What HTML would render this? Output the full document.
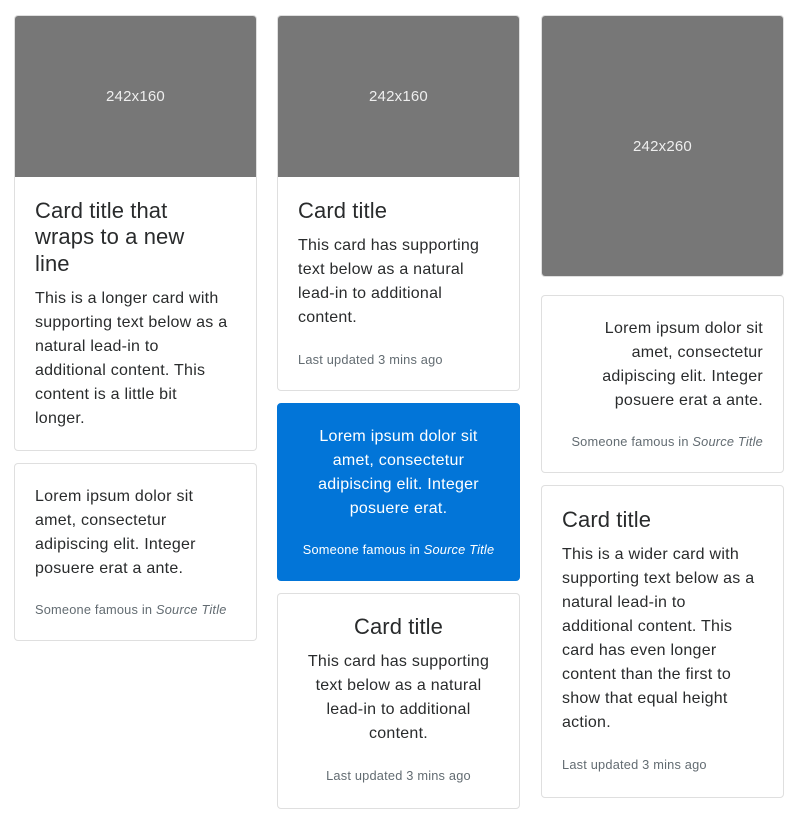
<!DOCTYPE html>
<html><head><meta charset="utf-8"><style>
*{box-sizing:border-box}
body{margin:0;width:802px;height:826px;background:#fff;font-family:"Liberation Sans",Helvetica,Arial,sans-serif;color:#292b2c;position:relative;overflow:hidden}
.card{position:absolute;width:243px;border:1px solid rgba(0,0,0,.125);border-radius:4px;background:#fff;overflow:hidden}
.img{background:#777;color:#eee;font-size:15px;display:flex;align-items:center;justify-content:center;letter-spacing:0.2px}
.body{padding:21px 20px 19px 20px;white-space:nowrap}
.title{font-size:22px;line-height:26.4px;margin:0 0 10px;font-weight:500;letter-spacing:0.1px}
p{margin:0;font-size:16px;line-height:24px;letter-spacing:0.25px}
.sm{font-size:12.8px;line-height:19.2px;color:#636c72;margin-top:19.4px;letter-spacing:0.2px}
.blue{background:#0275d8;border-color:#0275d8;color:#fff}
.blue .sm{color:#fff}
.c{text-align:center}.r{text-align:right}
</style></head><body>

<div class="card" style="left:14px;top:15px;height:436px">
<div class="img" style="height:161px">242x160</div>
<div class="body"><div class="title">Card title that<br>wraps to a new<br>line</div>
<p>This is a longer card with<br>supporting text below as a<br>natural lead-in to<br>additional content. This<br>content is a little bit<br>longer.</p></div></div>

<div class="card" style="left:14px;top:463px;height:178px">
<div class="body"><p>Lorem ipsum dolor sit<br>amet, consectetur<br>adipiscing elit. Integer<br>posuere erat a ante.</p>
<div class="sm">Someone famous in <i>Source Title</i></div></div></div>

<div class="card" style="left:277px;top:15px;height:376px">
<div class="img" style="height:161px">242x160</div>
<div class="body"><div class="title">Card title</div>
<p>This card has supporting<br>text below as a natural<br>lead-in to additional<br>content.</p>
<div class="sm">Last updated 3 mins ago</div></div></div>

<div class="card blue c" style="left:277px;top:403px;height:178px">
<div class="body"><p>Lorem ipsum dolor sit<br>amet, consectetur<br>adipiscing elit. Integer<br>posuere erat.</p>
<div class="sm">Someone famous in <i>Source Title</i></div></div></div>

<div class="card c" style="left:277px;top:593px;height:216px">
<div class="body" style="padding-top:20px"><div class="title">Card title</div>
<p>This card has supporting<br>text below as a natural<br>lead-in to additional<br>content.</p>
<div class="sm">Last updated 3 mins ago</div></div></div>

<div class="card" style="left:541px;top:15px;height:262px">
<div class="img" style="height:261px">242x260</div></div>

<div class="card r" style="left:541px;top:295px;height:178px">
<div class="body"><p>Lorem ipsum dolor sit<br>amet, consectetur<br>adipiscing elit. Integer<br>posuere erat a ante.</p>
<div class="sm">Someone famous in <i>Source Title</i></div></div></div>

<div class="card" style="left:541px;top:485px;height:313px">
<div class="body"><div class="title">Card title</div>
<p>This is a wider card with<br>supporting text below as a<br>natural lead-in to<br>additional content. This<br>card has even longer<br>content than the first to<br>show that equal height<br>action.</p>
<div class="sm">Last updated 3 mins ago</div></div></div>

</body></html>
